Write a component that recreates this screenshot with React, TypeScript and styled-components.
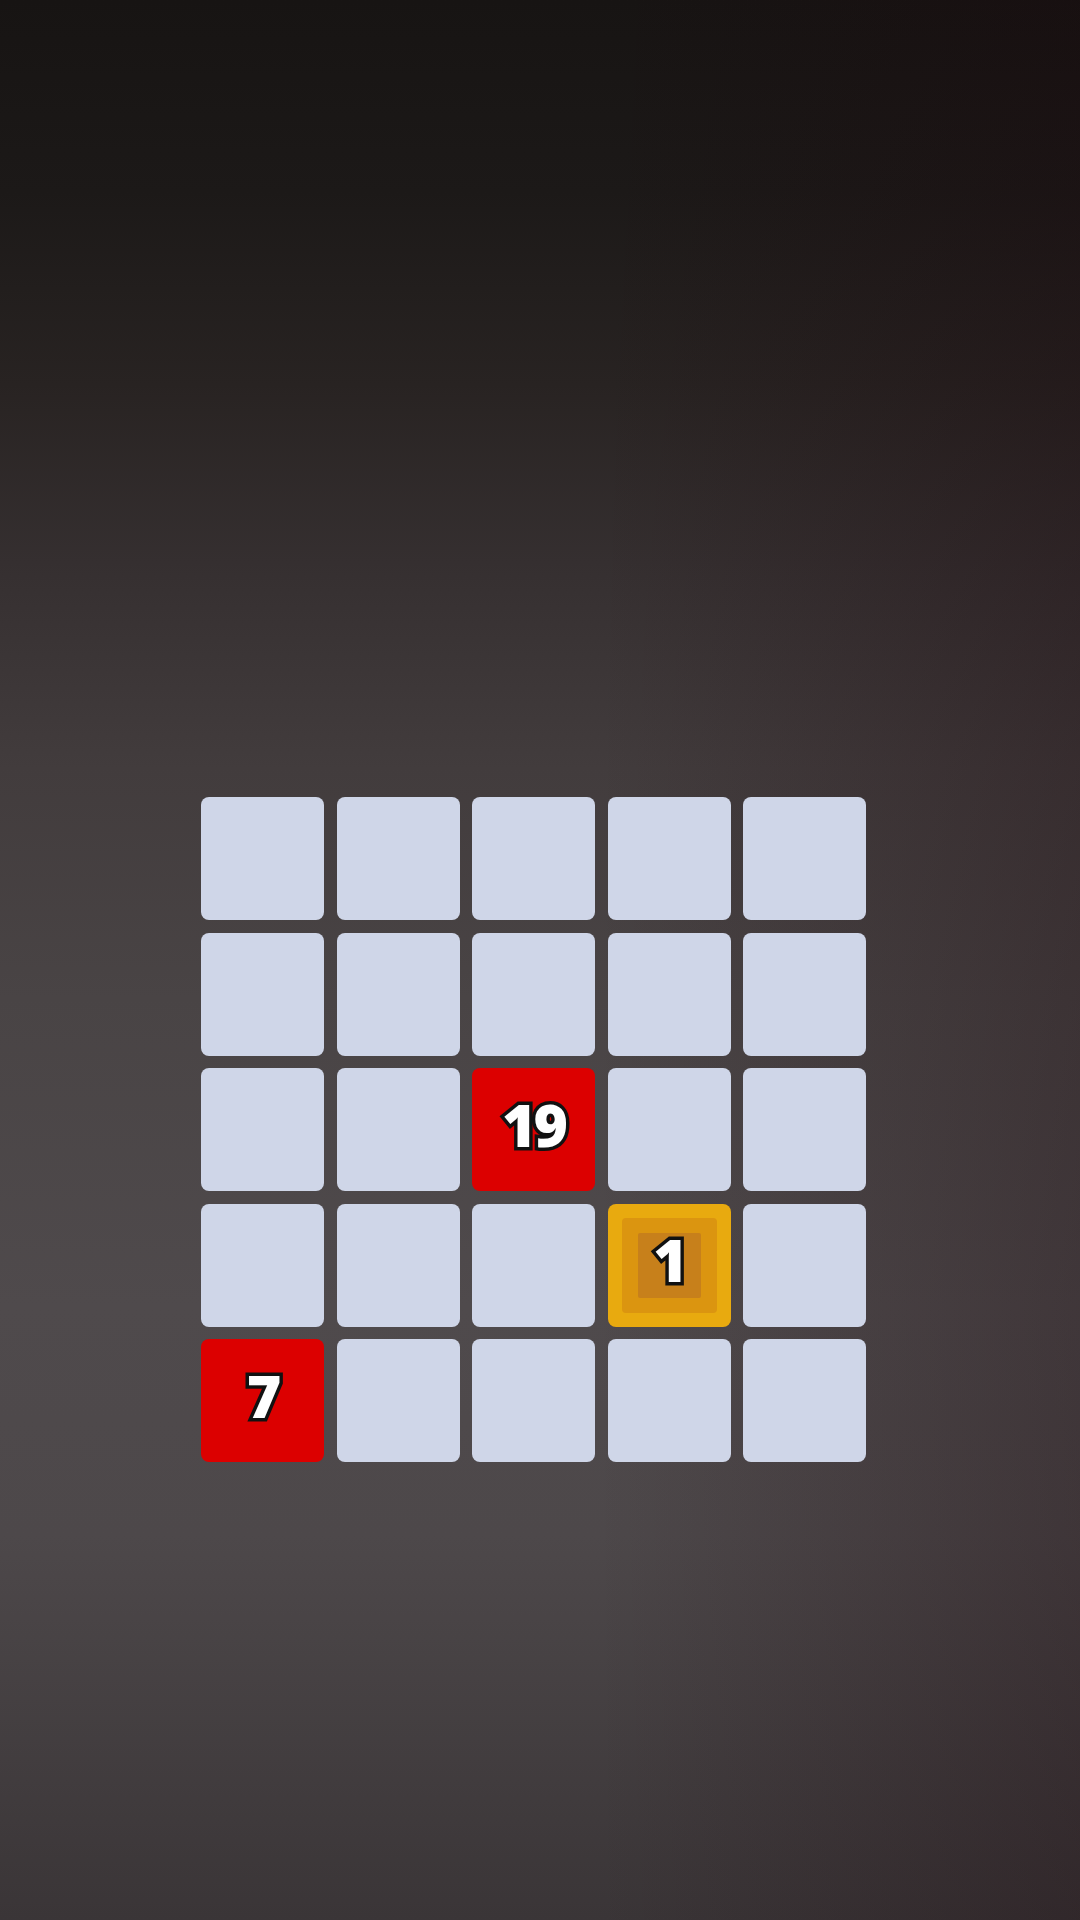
import styled, { createGlobalStyle } from "styled-components";

const GlobalStyle = createGlobalStyle`
  html, body {
    margin: 0;
    padding: 0;
  }
  body {
    font-family: "Open Sans", "Liberation Sans", sans-serif;
  }
`;

type Cell = { n?: number; kind?: "red" | "gold" };

const board: Cell[][] = [
  [{}, {}, {}, {}, {}],
  [{}, {}, {}, {}, {}],
  [{}, {}, { n: 19, kind: "red" }, {}, {}],
  [{}, {}, {}, { n: 1, kind: "gold" }, {}],
  [{ n: 7, kind: "red" }, {}, {}, {}, {}],
];

const App = () => {
  return (
    <Screen>
      <GlobalStyle />
      <Board>
        {board.map((row, r) =>
          row.map((c, i) => {
            if (c.kind === "gold") {
              return (
                <GoldTile key={`${r}-${i}`}>
                  <GoldMid>
                    <GoldInner>
                      <Num>{c.n}</Num>
                    </GoldInner>
                  </GoldMid>
                </GoldTile>
              );
            }
            return (
              <Tile key={`${r}-${i}`} $red={c.kind === "red"}>
                {c.n !== undefined && <Num>{c.n}</Num>}
              </Tile>
            );
          })
        )}
      </Board>
    </Screen>
  );
};

export default App;

const Screen = styled.div`
  width: 1080px;
  height: 1920px;
  box-sizing: border-box;
  padding: 797px 0 0 201px;
  display: flex;
  align-items: flex-start;
  background:
    linear-gradient(90deg, rgba(0, 0, 0, 0) 55%, rgba(25, 5, 10, 0.28) 100%),
    linear-gradient(
      180deg,
      #171413 0%,
      #1c1918 10%,
      #282322 20%,
      #363031 30%,
      #423c3d 40%,
      #494445 52%,
      #4f4a4c 68%,
      #4d484a 80%,
      #3a3537 100%
    );
`;

const Board = styled.div`
  width: 665px;
  height: 665px;
  display: grid;
  grid-template-columns: repeat(5, 1fr);
  grid-template-rows: repeat(5, 1fr);
  gap: 12.5px;
`;

const Tile = styled.div<{ $red?: boolean }>`
  border-radius: 8px;
  background: ${(p) => (p.$red ? "#dc0000" : "#cfd6e8")};
  display: flex;
  align-items: center;
  justify-content: center;
`;

const GoldTile = styled.div`
  border-radius: 8px;
  background: #e8aa0f;
  padding: 14px;
  display: flex;
`;

const GoldMid = styled.div`
  flex: 1;
  border-radius: 4px;
  background: #db9510;
  padding: 15px 16px;
  display: flex;
`;

const GoldInner = styled.div`
  flex: 1;
  border-radius: 2px;
  background: #c7801b;
  display: flex;
  align-items: center;
  justify-content: center;
`;

const Num = styled.span`
  font-family: "Open Sans", "Liberation Sans", sans-serif;
  font-weight: 800;
  font-size: 59px;
  line-height: 1;
  color: #ffffff;
  -webkit-text-stroke: 7px #111;
  paint-order: stroke fill;
  letter-spacing: -3px;
  margin-top: -11px;
`;
